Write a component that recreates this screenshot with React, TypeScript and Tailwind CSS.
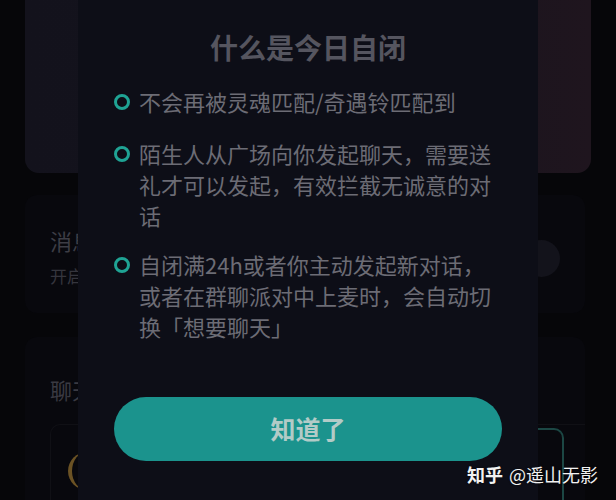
import React from "react";

const Bullet = ({ children, className = "" }: { children: React.ReactNode; className?: string }) => (
  <div className={`flex items-start ${className}`}>
    <div className="mt-[7.5px] h-[16px] w-[16px] shrink-0 rounded-full border-[3px] border-[#1fa394]" />
    <p className="ml-[9px] w-[362px] text-[22px] leading-[31px] text-[#6c6c75]">{children}</p>
  </div>
);

export default function App() {
  return (
    <div className="relative h-[500px] w-[616px] overflow-hidden bg-[#060609] font-['Noto_Sans_CJK_SC','Noto_Sans',sans-serif]">
      {/* background page */}
      <div className="flex flex-col px-[25px]">
        <div className="h-[173px] rounded-b-[14px] bg-gradient-to-r from-[#13121c] via-[#14131d] to-[#1f151e]" />
        <div className="relative mr-[6px] mt-[22px] flex h-[118px] flex-col rounded-[12px] bg-[#08080d] pl-[25px] pt-[30px]">
          <span className="text-[22px] leading-[30px] text-[#3d3d45]">消息</span>
          <span className="mt-[10px] text-[17px] leading-[22px] text-[#35353d]">开启</span>
          <div className="absolute right-[25px] top-[45px] h-[37px] w-[37px] rounded-full bg-[#13131b]" />
        </div>
        <div className="mr-[6px] mt-[24px] flex h-[200px] flex-col rounded-[12px] bg-[#08080d] pl-[25px] pt-[37px]">
          <span className="text-[22px] leading-[30px] text-[#3a3a42]">聊天</span>
          <div className="mt-[20px] flex h-[120px] rounded-tl-[10px] border-l border-t border-[#101015] pl-[17px] pt-[27px]">
            <div className="h-[38px] w-[19px] rounded-l-full border-l-[4px] border-[#6b5224]" />
          </div>
        </div>
      </div>

      {/* teal outlined box on the right */}
      <div className="absolute left-[470px] top-[428px] h-[100px] w-[94px] rounded-tr-[10px] border-r-2 border-t-2 border-[#1c4744]" />

      {/* modal */}
      <div className="absolute left-[78px] top-0 flex h-[500px] w-[460px] flex-col bg-[#0d0e17] px-[36px]">
        <h1 className="mt-[28px] text-center text-[28px] font-bold leading-[38px] text-[#55555f]">
          什么是今日自闭
        </h1>
        <Bullet className="mt-[20px]">不会再被灵魂匹配/奇遇铃匹配到</Bullet>
        <Bullet className="mt-[21px]">陌生人从广场向你发起聊天，需要送礼才可以发起，有效拦截无诚意的对话</Bullet>
        <Bullet className="mt-[18px]">自闭满24h或者你主动发起新对话，或者在群聊派对中上麦时，会自动切换「想要聊天」</Bullet>
        <button className="mt-[55px] flex h-[64px] w-[388px] items-center justify-center rounded-full bg-[#1b938d] text-[25px] font-bold text-[#b2cbc7]">
          知道了
        </button>
      </div>

      {/* watermark */}
      <div className="absolute left-[467px] top-[461px] flex items-center text-[18px] leading-[26px] text-[#f2f2f2] [text-shadow:0_0_2px_rgba(0,0,0,0.6)]">
        <span className="font-bold">知乎</span>
        <span className="ml-[6px]">@遥山无影</span>
      </div>
    </div>
  );
}
